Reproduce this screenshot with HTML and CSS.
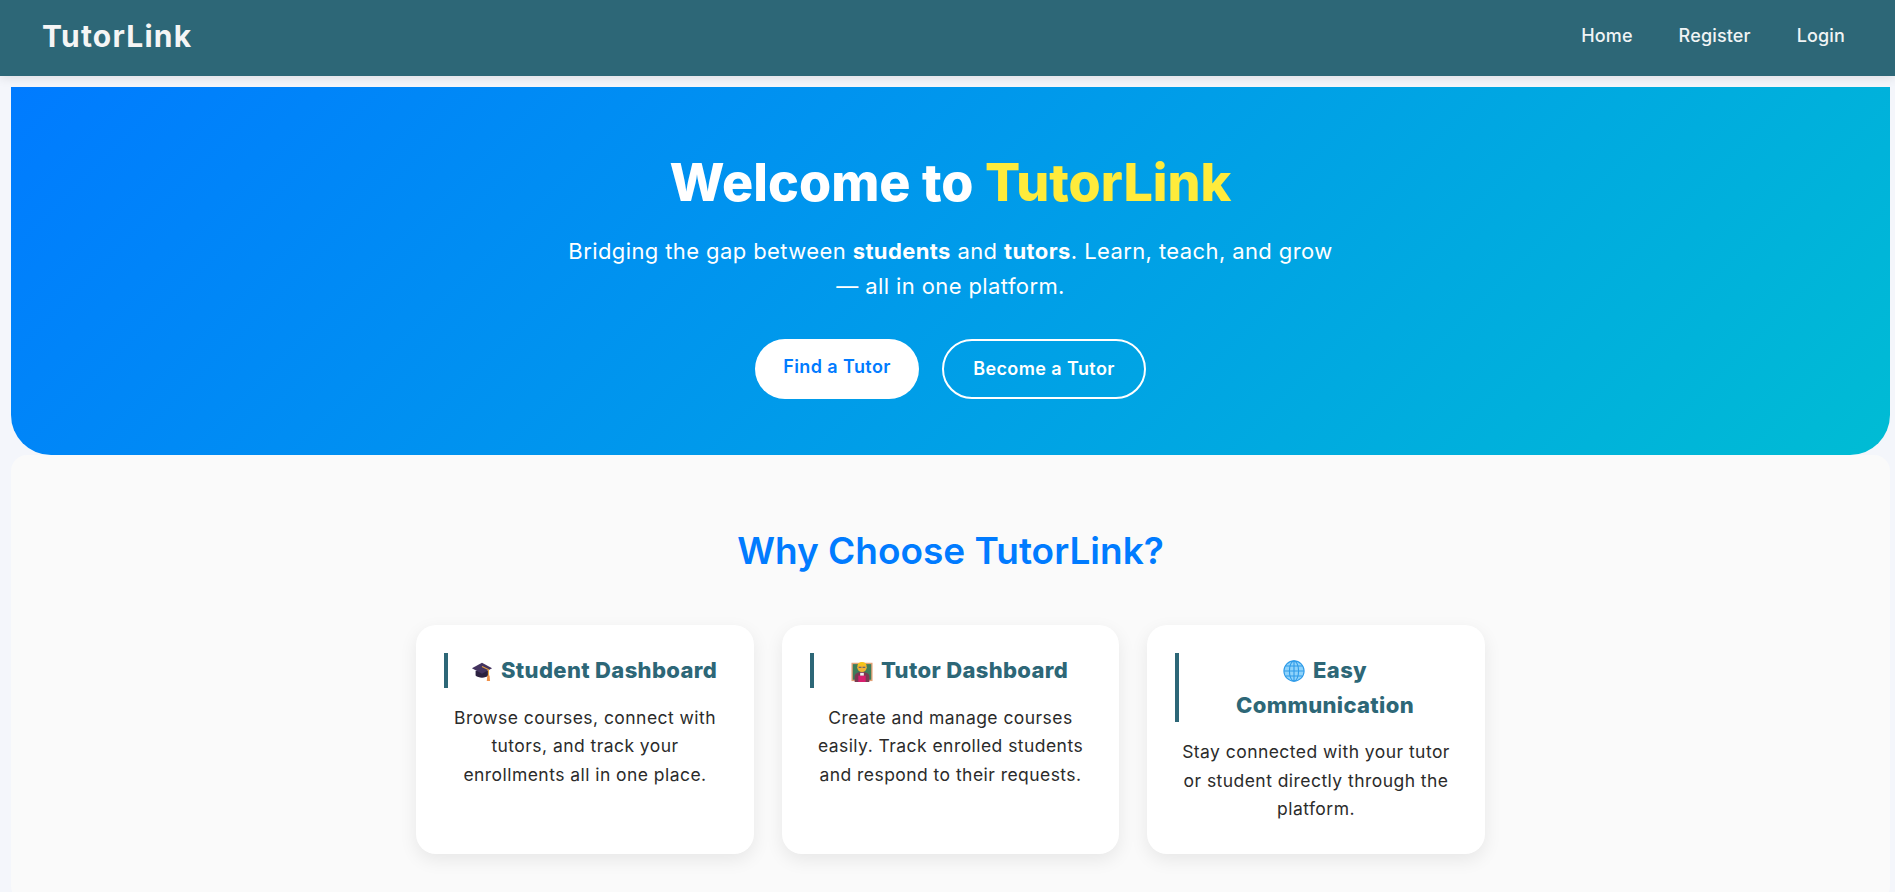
FILE: index.html
```html
<!DOCTYPE html>
<html>
<head>
    <meta charset="utf-8">
    <meta name="viewport" content="width=device-width">
    <title>TutorLink</title>
    <link rel="stylesheet" href="styles.css">
</head>
<body>
    <nav class="navbar">
        <a href="#" class="logo">TutorLink</a>
        <ul class="nav-links">
            <li><a href="#">Home</a></li>
            <li><a href="#">Register</a></li>
            <li><a href="#">Login</a></li>
        </ul>
    </nav>

    <main class="page">
        <section class="hero">
            <h1>Welcome to <span class="brand">TutorLink</span></h1>
            <p>Bridging the gap between <strong>students</strong> and <strong>tutors</strong>. Learn, teach, and grow — all in one platform.</p>
            <div class="hero-btns">
                <a href="#" class="btn btn-solid">Find a Tutor</a>
                <a href="#" class="btn btn-outline">Become a Tutor</a>
            </div>
        </section>

        <section class="features">
            <h2>Why Choose TutorLink?</h2>
            <div class="cards">
                <div class="card">
                    <h3>
                        <svg class="emoji" viewBox="0 0 24 24">
                            <path d="M5 12v5c3 3 11 3 14 0v-5z" fill="#2b2140"/>
                            <path d="M1 9l11-6 11 6-11 6z" fill="#43335f"/>
                            <path d="M12 7l7 3.5V18" fill="none" stroke="#e8a33d" stroke-width="1.2"/>
                            <path d="M17.8 17h2.4l.6 6h-3.6z" fill="#f0924a"/>
                        </svg>
                        Student Dashboard
                    </h3>
                    <p>Browse courses, connect with tutors, and track your enrollments all in one place.</p>
                </div>
                <div class="card">
                    <h3>
                        <svg class="emoji" viewBox="0 0 24 24">
                            <rect x="0.5" y="3" width="23" height="20" fill="#e3a277"/>
                            <rect x="2" y="4.5" width="20" height="17" fill="#3d7d5a"/>
                            <path d="M4 24v-6c0-3 3-5 8-5s8 2 8 5v6z" fill="#7a3b52"/>
                            <rect x="8" y="17" width="8" height="7" fill="#d81e6e"/>
                            <path d="M10 14h4v3h-4z" fill="#f2f2f2"/>
                            <circle cx="12" cy="8" r="5.2" fill="#f2b233"/>
                            <path d="M7 6c1-5 9-5 10 0z" fill="#f5c518"/>
                            <path d="M8.4 8h3M12.6 8h3" stroke="#6a6a6a" stroke-width="1.2"/>
                        </svg>
                        Tutor Dashboard
                    </h3>
                    <p>Create and manage courses easily. Track enrolled students and respond to their requests.</p>
                </div>
                <div class="card">
                    <h3>
                        <svg class="emoji" viewBox="0 0 24 24">
                            <circle cx="12" cy="12" r="11" fill="#8fd3fb"/>
                            <g fill="none" stroke="#2f9be8" stroke-width="1.2">
                                <circle cx="12" cy="12" r="11"/>
                                <ellipse cx="12" cy="12" rx="5" ry="11"/>
                                <path d="M12 1v22M1 12h22M2.6 6.5h18.8M2.6 17.5h18.8"/>
                            </g>
                        </svg>
                        Easy Communication
                    </h3>
                    <p>Stay connected with your tutor or student directly through the platform.</p>
                </div>
            </div>
        </section>
    </main>
</body>
</html>
```

FILE: styles.css
```css
* {
    box-sizing: border-box;
}
body {
    margin: 0;
    background-color: #f4f6fb;
    color: #2b2b2b;
    font-family: "Inter", "Liberation Sans", sans-serif;
}
.navbar {
    display: flex;
    justify-content: space-between;
    align-items: center;
    height: 76px;
    padding: 0 50px 5px 42px;
    background-color: #2d6777;
    box-shadow: 0 2px 10px rgba(0, 0, 0, 0.1);
}
.logo {
    color: #f5f5f5;
    font-size: 30px;
    font-weight: 700;
    letter-spacing: 1.2px;
    text-decoration: none;
}
.nav-links {
    display: flex;
    gap: 46px;
    margin: 0;
    padding: 0;
    list-style: none;
}
.nav-links a {
    color: #f0f4f5;
    font-size: 18px;
    font-weight: 500;
    letter-spacing: 0.15px;
    text-decoration: none;
}
.page {
    padding: 11px 5px 0 11px;
}
.hero {
    height: 368px;
    padding-top: 66px;
    text-align: center;
    color: #fff;
    background: linear-gradient(135deg, #007bff, #00bcd4);
    border-radius: 0 0 40px 40px;
}
.hero h1 {
    margin: 0 0 21px;
    font-size: 52px;
    font-weight: 800;
    line-height: 60px;
}
.brand {
    color: #ffeb3b;
}
.hero p {
    width: 780px;
    margin: 0 auto 35px;
    font-size: 22px;
    font-weight: 400;
    letter-spacing: 0.4px;
    line-height: 35px;
}
.hero-btns {
    display: flex;
    justify-content: center;
    gap: 23px;
}
.btn {
    display: block;
    height: 60px;
    border-radius: 30px;
    font-size: 18px;
    font-weight: 600;
    letter-spacing: 0.4px;
    text-decoration: none;
}
.btn-solid {
    width: 164px;
    padding-top: 17px;
    background-color: #fff;
    color: #007bff;
}
.btn-outline {
    width: 204px;
    padding-top: 17px;
    border: 2px solid #fff;
    color: #fff;
}
.features {
    padding: 68px 0 48px;
    background-color: #fafafa;
    border-radius: 16px;
    text-align: center;
}
.features h2 {
    margin: 0 0 46px;
    color: #007bff;
    font-size: 37px;
    font-weight: 600;
    line-height: 56px;
}
.cards {
    display: flex;
    justify-content: center;
    gap: 28px;
}
.card {
    width: 337.5px;
    height: 229px;
    padding: 28px;
    background-color: #fff;
    border-radius: 20px;
    box-shadow: 0 6px 18px rgba(0, 0, 0, 0.08);
}
.card h3 {
    margin: 0 0 16px;
    padding-left: 14px;
    border-left: 4px solid #2d6777;
    color: #2d6777;
    font-size: 22px;
    font-weight: 800;
    letter-spacing: 0.35px;
    line-height: 34.5px;
}
.emoji {
    width: 22px;
    height: 22px;
    margin-right: 3px;
    vertical-align: -4px;
}
.card p {
    margin: 0;
    font-size: 17.5px;
    letter-spacing: 0.45px;
    line-height: 28.5px;
}
```
